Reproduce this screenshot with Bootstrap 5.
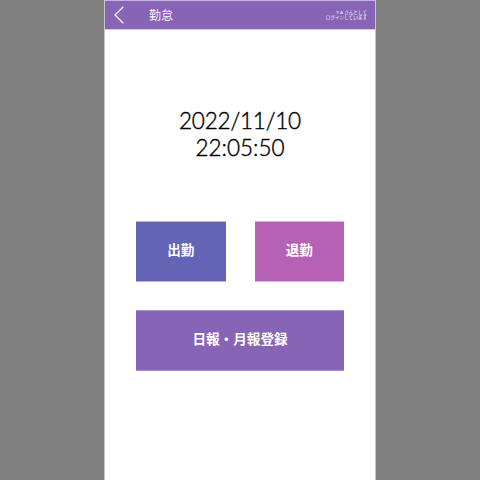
<!DOCTYPE html>
<html lang="ja">
<head>
<meta charset="utf-8">
<meta name="viewport" content="width=device-width, initial-scale=1">
<title>勤怠</title>
<link href="https://cdn.jsdelivr.net/npm/bootstrap@5.3.0/dist/css/bootstrap.min.css" rel="stylesheet">
<style>
body { background: #808080; font-family: Lato, "Noto Sans CJK JP", sans-serif; }
.phone { width: 272px; height: 480px; border: solid #c9c5cf; border-width: 0 1px; }
.topbar { height: 30px; background: #8864b7; border-top: 1px solid #c4b4da; border-bottom: 1px solid #d5c9e5; padding: 0 8px 0 9px; }
.back { width: 10px; height: 18px; }
.title { font-size: 12px; line-height: 18px; margin-left: 25px; padding-top: 2px; font-weight: 350; }
.login { font-size: 4.6px; line-height: 5.5px; }
.clock { font-size: 22.5px; line-height: 27px; margin-top: 77px; color: #000; font-weight: 300; -webkit-text-stroke: .4px #000; }
.date { letter-spacing: -.2px; }
.actions { margin: 59.5px 31px 0; gap: 28px; }
.pair { gap: 29px; }
.tile { height: 61px; border: solid; border-width: 1px 0; border-radius: 0; font-size: 13.6px; font-weight: 700; color: #fff; padding: 0 0 1px; }
.tile-in { background: #6464b7; border-color: #b4b4dc; }
.tile-out { background: #b761b6; border-color: #dbb0db; }
.tile-report { background: #8864b7; border-color: #a78dca; }
</style>
<script src="https://cdn.jsdelivr.net/npm/bootstrap@5.3.0/dist/js/bootstrap.bundle.min.js"></script>
</head>
<body class="overflow-hidden">
<div class="phone mx-auto bg-white">
  <header class="topbar d-flex align-items-center text-white">
    <svg class="back" viewBox="0 0 10 18" fill="none" stroke="#fff" stroke-width="1.2"><path d="M9.3 .8 1 9l8.3 8.2"/></svg>
    <div class="title">勤怠</div>
    <div class="login ms-auto text-end">Y A さんとして<br>ログインしています</div>
  </header>
  <main>
    <div class="clock text-center"><span class="date">2022/11/10</span><br>22:05:50</div>
    <div class="actions d-flex flex-column">
      <div class="pair d-flex">
        <button class="btn tile tile-in flex-fill">出勤</button>
        <button class="btn tile tile-out flex-fill">退勤</button>
      </div>
      <button class="btn tile tile-report w-100">日報・月報登録</button>
    </div>
  </main>
</div>
</body>
</html>
